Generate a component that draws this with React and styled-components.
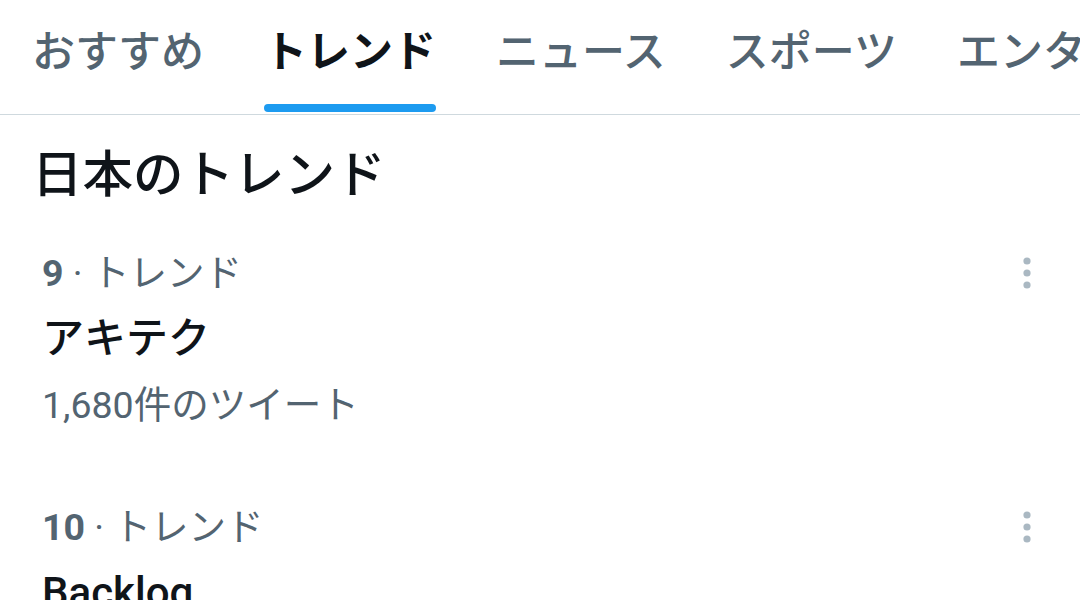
import React from 'react'
import styled, { createGlobalStyle } from 'styled-components'

const GlobalStyle = createGlobalStyle`
  html, body {
    margin: 0;
    padding: 0;
    background: #fff;
  }
  body {
    font-family: Roboto, "Noto Sans CJK JP", sans-serif;
    color: #0f1419;
    overflow: hidden;
  }
`

const Page = styled.div`
  width: 1080px;
  height: 600px;
  overflow: hidden;
  background: #fff;
`

const TabBar = styled.nav`
  display: flex;
  height: 114px;
  padding-left: 2px;
  border-bottom: 1px solid #cfd9de;
  white-space: nowrap;
  overflow: hidden;
`

const Tab = styled.div`
  display: flex;
  flex-direction: column;
  align-items: stretch;
  flex-shrink: 0;
  padding: 0 30px;
`

const TabLabel = styled.span`
  flex: 1;
  display: flex;
  align-items: center;
  font-size: 43px;
  line-height: 1;
  font-weight: ${p => (p.$active ? 700 : 500)};
  color: ${p => (p.$active ? '#0f1419' : '#536471')};
`

const Indicator = styled.div`
  height: 8px;
  margin-bottom: 2px;
  border-radius: 4px;
  background: ${p => (p.$active ? '#1d9bf0' : 'transparent')};
`

const Heading = styled.h2`
  margin: 29px 0 0;
  padding-left: 32px;
  font-size: 50.5px;
  line-height: 62px;
  font-weight: 500;
`

const Item = styled.div`
  display: flex;
  align-items: flex-start;
  justify-content: space-between;
  padding: 34px 49px 22px 42px;
`

const ItemBody = styled.div`
  display: flex;
  flex-direction: column;
`

const Meta = styled.div`
  font-size: 37.5px;
  line-height: 66px;
  font-weight: 400;
  color: #536471;
`

const Rank = styled.span`
  font-weight: 700;
`

const Title = styled.div`
  font-size: 42px;
  line-height: 66px;
  font-weight: 500;
  color: #0f1419;
`

const Count = styled.div`
  font-size: 37.5px;
  line-height: 66px;
  color: #536471;
`

const MoreButton = styled.div`
  height: 66px;
  display: flex;
  align-items: center;
`

const tabs = ['おすすめ', 'トレンド', 'ニュース', 'スポーツ', 'エンターテイメント']

const trends = [
  { rank: 9, name: 'アキテク', count: '1,680件のツイート' },
  { rank: 10, name: 'Backlog', count: '2,143件のツイート' }
]

const MoreIcon = () => (
  <svg width="8" height="32" viewBox="0 0 8 32">
    <circle cx="4" cy="4" r="3.6" fill="#aab8c2" />
    <circle cx="4" cy="16" r="3.6" fill="#aab8c2" />
    <circle cx="4" cy="28" r="3.6" fill="#aab8c2" />
  </svg>
)

export default function App() {
  return (
    <Page>
      <GlobalStyle />
      <TabBar>
        {tabs.map((t, i) => (
          <Tab key={t}>
            <TabLabel $active={i === 1}>{t}</TabLabel>
            <Indicator $active={i === 1} />
          </Tab>
        ))}
      </TabBar>
      <Heading>日本のトレンド</Heading>
      {trends.map(t => (
        <Item key={t.rank}>
          <ItemBody>
            <Meta>
              <Rank>{t.rank}</Rank> · トレンド
            </Meta>
            <Title>{t.name}</Title>
            <Count>{t.count}</Count>
          </ItemBody>
          <MoreButton>
            <MoreIcon />
          </MoreButton>
        </Item>
      ))}
    </Page>
  )
}
